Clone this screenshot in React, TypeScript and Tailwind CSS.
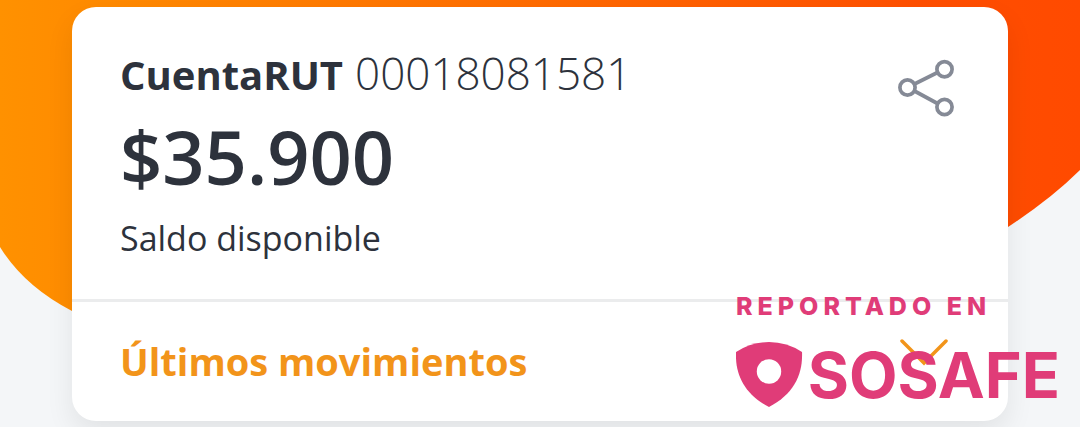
import React, { useState } from 'react';

interface Account {
  name: string;
  number: string;
  balance: string;
}

const account: Account = {
  name: 'CuentaRUT',
  number: '00018081581',
  balance: '$35.900',
};

export default function App() {
  return (
    <main className="relative isolate min-h-screen overflow-hidden bg-[#f4f6f8] font-['Open_Sans',sans-serif] text-[#2d323c]">
      <HeaderBackground />
      <div className="px-[72px] pt-[7px] pb-1">
        <BalanceCard account={account} />
      </div>
      <ReportedBadge />
    </main>
  );
}

function BalanceCard({ account }: { account: Account }) {
  const [open, setOpen] = useState(false);

  return (
    <section className="rounded-3xl bg-white shadow-[0_12px_28px_rgba(0,0,0,0.08)]">
      <div className="flex items-start justify-between px-12 pt-10 pb-9">
        <div>
          <h1 className="flex items-baseline gap-3 text-[40px] leading-[52px] font-bold">
            {account.name} <span className="text-[44px] font-light">{account.number}</span>
          </h1>
          <p className="text-[74px] leading-[112px] font-semibold">{account.balance}</p>
          <p className="text-[34px] leading-[50px]">Saldo disponible</p>
        </div>
        <button type="button" aria-label="Compartir" className="mt-3 mr-1 cursor-pointer text-[#858a96]">
          <ShareIcon />
        </button>
      </div>
      <button
        type="button"
        aria-expanded={open}
        className="flex w-full cursor-pointer items-center justify-between border-t-3 border-[#ebeced] px-12 pt-[31px] pb-8 text-[#f2941a]"
        onClick={() => setOpen(!open)}
      >
        <span className="text-[38px] leading-[56px] font-bold">Últimos movimientos</span>
        <svg className="mr-3 -mt-4" width="48" height="28" viewBox="0 0 48 28" fill="none" stroke="currentColor" strokeWidth="3.5" strokeLinecap="round">
          <path d="M2 2 24 24 46 2" />
        </svg>
      </button>
    </section>
  );
}

function ShareIcon() {
  return (
    <svg width="58" height="58" viewBox="0 0 58 58" fill="none" stroke="currentColor" strokeWidth="3.7">
      <circle cx="9.500" cy="28.500" r="7.600" />
      <circle cx="46.500" cy="10.300" r="7.600" />
      <circle cx="46.500" cy="48" r="7.600" />
      <path d="M16.500 25 39.500 13.500M16.500 32 39.500 44.500" />
    </svg>
  );
}

function HeaderBackground() {
  return (
    <svg className="absolute inset-x-0 top-0 -z-10 h-[360px] w-full" viewBox="0 0 1080 360" preserveAspectRatio="none" aria-hidden="true">
      <defs>
        <linearGradient id="header-fill" x1="0" x2="1" y1="0" y2="0">
          <stop offset="0" stopColor="#ff9100" />
          <stop offset="0.1" stopColor="#ff8a00" />
          <stop offset="0.85" stopColor="#ff4f00" />
          <stop offset="1" stopColor="#ff4a00" />
        </linearGradient>
      </defs>
      <path fill="url(#header-fill)" d="M0 0H1080V170Q1052 198 1008 227C800 350 300 400 72 311Q24 286 0 247Z" />
    </svg>
  );
}

function ReportedBadge() {
  return (
    <aside className="absolute right-5 bottom-5 w-[324px] font-[Inter,sans-serif] font-bold text-[#e03c78]" aria-label="Reportado en SOSAFE">
      <p className="text-[25px] leading-6 font-extrabold tracking-[0.2em] whitespace-nowrap">REPORTADO EN</p>
      <div className="mt-6 flex items-center justify-between">
        <svg className="shrink-0" width="67" height="65" viewBox="0 0 67 65" aria-hidden="true">
          <path fill="currentColor" d="M0 10Q15 0 33 0T66 10C67 32 58 52 33 65C8 52 -1 32 0 10Z" />
          <circle cx="33" cy="29.500" r="12.200" fill="#fff" />
        </svg>
        <span className="text-[63px] leading-[64px]">SOSAFE</span>
      </div>
    </aside>
  );
}
